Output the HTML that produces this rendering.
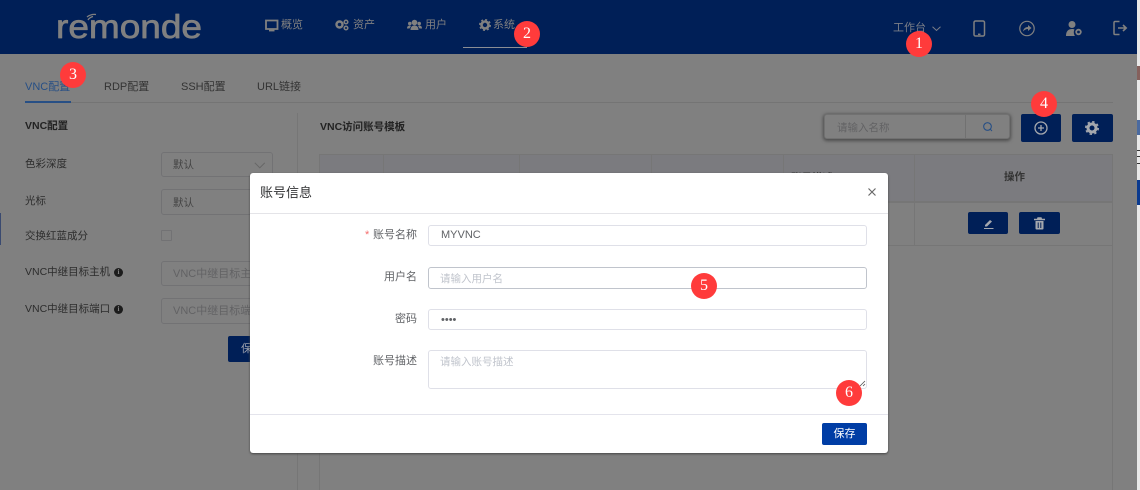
<!DOCTYPE html>
<html><head><meta charset="utf-8"><style>
html,body{margin:0;padding:0}
body{width:1140px;height:490px;overflow:hidden;position:relative;background:#808080;font-family:"Liberation Sans","Noto Sans CJK SC",sans-serif;font-size:11px;color:#2c2c2c}
.a{position:absolute;white-space:nowrap}
.b{position:absolute;box-sizing:border-box}
.t{position:absolute;white-space:nowrap;line-height:14px}
.nav{color:#808080;font-size:11px}
.in{position:absolute;box-sizing:border-box;border:1px solid #727274;border-radius:3px}
.ph{color:#626264}
.btn{position:absolute;background:#001f57;border-radius:2px}
.mi{position:absolute;box-sizing:border-box;border:1px solid #dfe0e8;border-radius:3px;background:#fff;font-size:11px;padding-left:12px;color:#606266;line-height:19px}
.bd{position:absolute;width:26px;height:26px;margin:-13px 0 0 -13px;border-radius:50%;background:#ff3b3b;color:#fff;font:16px/26px "Liberation Serif",serif;text-align:center;z-index:10}
svg{position:absolute;overflow:visible}
</style></head><body>
<!-- header -->
<div class="b" style="left:0;top:0;width:1137px;height:54px;background:#001f57"></div>
<svg style="left:0;top:0" width="230" height="54">
<text x="56" y="38" font-family="Liberation Sans,sans-serif" font-size="33" fill="#808080" stroke="#808080" stroke-width=".7" stroke-linejoin="round" textLength="146" lengthAdjust="spacingAndGlyphs">remonde</text>
<path d="M88 20a8 8 0 0 1 5-3.500M87 17a12 12 0 0 1 9-2.500" fill="none" stroke="#808080" stroke-width="1.300"/>
</svg>
<svg style="left:265px;top:19px" width="14" height="13"><path d="M1 1.500h11.500v8.500h-11.500z" fill="none" stroke="#808080" stroke-width="1.800"/><path d="M4 11.500h5.500" stroke="#808080" stroke-width="1.800"/></svg>
<div class="t nav" style="left:281px;top:18px">概览</div>
<svg style="left:335px;top:19px" width="15" height="13"><circle cx="4.500" cy="5.500" r="3" fill="none" stroke="#808080" stroke-width="2.400"/><circle cx="11" cy="3" r="1.800" fill="none" stroke="#808080" stroke-width="1.500"/><circle cx="11" cy="9" r="1.800" fill="none" stroke="#808080" stroke-width="1.500"/></svg>
<div class="t nav" style="left:353px;top:18px">资产</div>
<svg style="left:407px;top:19px" width="15" height="12"><circle cx="7.500" cy="3.500" r="2.800" fill="#808080"/><circle cx="2.800" cy="4.500" r="1.800" fill="#808080"/><circle cx="12.200" cy="4.500" r="1.800" fill="#808080"/><path d="M3.500 11c0-3 1.500-4.500 4-4.500s4 1.500 4 4.500zM0 9.500c0-2 1-3 3-3l1 .5-1.500 2.500zM15 9.500c0-2-1-3-3-3l-1 .5 1.500 2.500z" fill="#808080"/></svg>
<div class="t nav" style="left:425px;top:18px">用户</div>
<svg style="left:479px;top:19px" width="12" height="12"><circle cx="6" cy="6" r="3.500" fill="none" stroke="#808080" stroke-width="2.600"/><circle cx="6" cy="6" r="5.300" fill="none" stroke="#808080" stroke-width="1.400" stroke-dasharray="2 2.160"/></svg>
<div class="t nav" style="left:493px;top:18px">系统</div>
<div class="b" style="left:463px;top:47px;width:64px;height:1px;background:#8a8d94"></div>
<div class="t" style="left:893px;top:21px;color:#7a7e87;font-size:11px">工作台</div>
<svg style="left:932px;top:26px" width="9" height="6"><path d="M.5 .8l4 3.700 4-3.700" fill="none" stroke="#7a7e87"/></svg>
<svg style="left:973px;top:20px" width="13" height="17"><rect x="1" y="1" width="10.500" height="15" rx="1.500" fill="none" stroke="#808080" stroke-width="1.500"/><path d="M5 14.300h2.500" stroke="#808080" stroke-width="1.500"/></svg>
<svg style="left:1019px;top:20px" width="17" height="17"><circle cx="8" cy="8.500" r="7.200" fill="none" stroke="#808080" stroke-width="1.200"/><path d="M4 11.500c.5-3 2.500-4.500 5-4.500v-2l3.500 3-3.500 3v-2c-2 0-3.500 .8-5 2.500z" fill="#808080"/></svg>
<svg style="left:1066px;top:20px" width="17" height="17"><circle cx="6" cy="4.500" r="3.500" fill="#808080"/><path d="M0 16c0-5 2.500-7 6-7 1 0 2 .2 2.500 .5-1 1.500-1 4.500 .5 6.500z" fill="#808080"/><circle cx="12.500" cy="12" r="2.300" fill="none" stroke="#808080" stroke-width="1.800"/></svg>
<svg style="left:1113px;top:20px" width="16" height="16"><path d="M6.500 1.500h-4.500a1 1 0 0 0-1 1v11a1 1 0 0 0 1 1h4.500" fill="none" stroke="#808080" stroke-width="1.500"/><path d="M5 8h7.500M10 5l3.200 3-3.200 3" fill="none" stroke="#808080" stroke-width="1.600"/></svg>

<!-- tabs -->
<div class="t" style="left:25px;top:80px;color:#274f85">VNC配置</div>
<div class="t" style="left:104px;top:80px;color:#333">RDP配置</div>
<div class="t" style="left:181px;top:80px;color:#333">SSH配置</div>
<div class="t" style="left:257px;top:80px;color:#333">URL链接</div>
<div class="b" style="left:25px;top:102px;width:1088px;height:1px;background:#747474"></div>
<div class="b" style="left:25px;top:101px;width:46px;height:2px;background:#274f85"></div>

<!-- left -->
<div class="b" style="left:297px;top:113px;width:1px;height:377px;background:#767676"></div>
<div class="t" style="left:25px;top:119px;font-size:10.500px;font-weight:bold;color:#222">VNC配置</div>
<div class="t" style="left:25px;top:157px;font-size:10.500px">色彩深度</div>
<div class="t" style="left:25px;top:194px;font-size:10.500px">光标</div>
<div class="t" style="left:25px;top:229px;font-size:10.500px">交换红蓝成分</div>
<div class="t" style="left:25px;top:265px;font-size:10.500px">VNC中继目标主机</div>
<div class="t" style="left:25px;top:302px;font-size:10.500px">VNC中继目标端口</div>
<div class="b" style="left:114px;top:268px;width:9px;height:9px;border-radius:50%;background:#1c1c1c;color:#808080;font:bold 7px/9px 'Liberation Serif',serif;text-align:center">i</div>
<div class="b" style="left:114px;top:305px;width:9px;height:9px;border-radius:50%;background:#1c1c1c;color:#808080;font:bold 7px/9px 'Liberation Serif',serif;text-align:center">i</div>
<div class="in" style="left:161px;top:152px;width:112px;height:25px"></div>
<div class="t" style="left:173px;top:158px;font-size:10.500px;color:#444">默认</div>
<svg style="left:254px;top:162px" width="12" height="7"><path d="M.8 .8l5 5 5-5" fill="none" stroke="#666"/></svg>
<div class="in" style="left:161px;top:189px;width:112px;height:26px"></div>
<div class="t" style="left:173px;top:196px;font-size:10.500px;color:#444">默认</div>
<div class="in" style="left:161px;top:230px;width:11px;height:11px;border-radius:1px"></div>
<div class="in" style="left:161px;top:261px;width:112px;height:25px"></div>
<div class="t ph" style="left:173px;top:267px">VNC中继目标主机</div>
<div class="in" style="left:161px;top:298px;width:112px;height:26px"></div>
<div class="t ph" style="left:173px;top:304px">VNC中继目标端口</div>
<div class="btn" style="left:228px;top:336px;width:45px;height:26px;color:#9aa0ad;line-height:26px;padding-left:13px;box-sizing:border-box;font-size:11px">保存</div>

<!-- right -->
<div class="t" style="left:320px;top:120px;font-size:10.500px;font-weight:bold;color:#222">VNC访问账号模板</div>
<div class="b" style="left:824px;top:114px;width:186px;height:25px;border:1px solid #717171;border-radius:3px;box-shadow:0 1px 3px 1px #4d4d4d;background:#808080"></div>
<div class="b" style="left:965px;top:114px;width:1px;height:25px;background:#717171"></div>
<div class="t ph" style="left:837px;top:121px;font-size:10.500px">请输入名称</div>
<svg style="left:983px;top:122px" width="10" height="10"><circle cx="4.500" cy="4.500" r="3.800" fill="none" stroke="#274f85" stroke-width="1.100"/><path d="M7 7l2 2" stroke="#274f85"/></svg>
<div class="btn" style="left:1021px;top:114px;width:40px;height:28px"></div>
<svg style="left:1034px;top:121px" width="14" height="14"><circle cx="7" cy="7" r="6" fill="none" stroke="#a5a8ae" stroke-width="1.300"/><path d="M4 7h6M7 4v6" stroke="#a5a8ae" stroke-width="1.300"/></svg>
<div class="btn" style="left:1072px;top:114px;width:41px;height:28px"></div>
<svg style="left:1085px;top:121px" width="14" height="14"><circle cx="7" cy="7" r="4" fill="none" stroke="#a5a8ae" stroke-width="3"/><circle cx="7" cy="7" r="6.200" fill="none" stroke="#a5a8ae" stroke-width="1.600" stroke-dasharray="2.400 2.470"/></svg>

<!-- table -->
<div class="b" style="left:319px;top:154px;width:794px;height:48px;background:#7b7b7f;border:1px solid #767676"></div>
<div class="b" style="left:319px;top:202px;width:794px;height:1px;background:#767676"></div>
<div class="b" style="left:319px;top:245px;width:794px;height:1px;background:#767676"></div>
<div class="b" style="left:319px;top:154px;width:1px;height:336px;background:#767676"></div>
<div class="b" style="left:1112px;top:154px;width:1px;height:336px;background:#767676"></div>
<div class="b" style="left:383px;top:154px;width:1px;height:92px;background:#767676"></div>
<div class="b" style="left:519px;top:154px;width:1px;height:92px;background:#767676"></div>
<div class="b" style="left:651px;top:154px;width:1px;height:92px;background:#767676"></div>
<div class="b" style="left:783px;top:154px;width:1px;height:92px;background:#767676"></div>
<div class="b" style="left:914px;top:154px;width:1px;height:92px;background:#767676"></div>
<div class="t" style="left:791px;top:171px;font-size:10.500px;font-weight:bold;color:#333">账号描述</div>
<div class="t" style="left:1004px;top:170px;font-size:10.500px;font-weight:bold;color:#333">操作</div>
<div class="btn" style="left:968px;top:212px;width:40px;height:22px"></div>
<svg style="left:983px;top:218px" width="12" height="11"><path d="M2 7l5-5 2 1.500-5 5H2z" fill="#a5a8ae"/><path d="M1 10.500h9.500" stroke="#a5a8ae" stroke-width="1"/></svg>
<div class="btn" style="left:1019px;top:212px;width:41px;height:22px"></div>
<svg style="left:1033px;top:217px" width="13" height="13"><path d="M1 2.500h11M4.500 2.500l.5-1.500h3l.5 1.500" fill="none" stroke="#a5a8ae" stroke-width="1.400"/><path d="M2.500 4h8v7.500a1 1 0 0 1-1 1h-6a1 1 0 0 1-1-1z" fill="#a5a8ae"/><path d="M5.200 5.500v5.500M7.800 5.500v5.500" stroke="#001f57"/></svg>

<!-- right window edge -->
<div class="b" style="left:1137px;top:0;width:3px;height:490px;background:#e8e8e8"></div>
<div class="b" style="left:1137px;top:180px;width:3px;height:25px;background:#0a3a8f"></div>
<div class="b" style="left:1137px;top:120px;width:3px;height:15px;background:#4a6aa0"></div>
<div class="b" style="left:1137px;top:150px;width:3px;height:1px;background:#333"></div>
<div class="b" style="left:1137px;top:156px;width:3px;height:1px;background:#333"></div>
<div class="b" style="left:1137px;top:163px;width:3px;height:1px;background:#333"></div>
<div class="b" style="left:1137px;top:66px;width:3px;height:14px;background:#85605c"></div>
<div class="b" style="left:0;top:213px;width:1px;height:32px;background:#3a4a70"></div>

<!-- modal -->
<div class="b" style="left:250px;top:173px;width:638px;height:280px;background:#fff;border-radius:3px;box-shadow:0 1px 2px #444"></div>
<div class="t" style="left:260px;top:185px;font-size:13px;line-height:16px;color:#303133">账号信息</div>
<svg style="left:868px;top:188px" width="8" height="8"><path d="M.5 .5l7 7M7.500 .5l-7 7" stroke="#6a6a6a" stroke-width="1.200"/></svg>
<div class="b" style="left:250px;top:213px;width:638px;height:1px;background:#e4e4e8"></div>
<div class="b" style="left:250px;top:414px;width:638px;height:1px;background:#e4e4ec"></div>

<div class="t" style="left:365px;top:228px;color:#f56c6c;font-size:11px">*</div>
<div class="t" style="left:373px;top:228px;color:#606266;font-size:11px">账号名称</div>
<div class="t" style="left:384px;top:270px;color:#606266;font-size:11px">用户名</div>
<div class="t" style="left:395px;top:312px;color:#606266;font-size:11px">密码</div>
<div class="t" style="left:373px;top:354px;color:#606266;font-size:11px">账号描述</div>

<div class="mi" style="left:428px;top:225px;width:439px;height:21px">MYVNC</div>
<div class="mi" style="left:428px;top:267px;width:439px;height:22px;border-color:#c0c4cc;color:#c0c4cc;font-size:10.500px;line-height:22px;padding-left:11px">请输入用户名</div>
<div class="mi" style="left:428px;top:309px;width:439px;height:21px;font-size:11px;line-height:20px">••••</div>
<div class="mi" style="left:428px;top:350px;width:439px;height:39px;color:#c0c4cc;font-size:10.500px;line-height:23px;padding-left:11px">请输入账号描述</div>
<svg style="left:859px;top:380px" width="7" height="7"><path d="M1 6l5-5M4 6l2-2" stroke="#555" stroke-width=".8"/></svg>
<div class="b" style="left:822px;top:423px;width:45px;height:22px;background:#003da5;border-radius:2px;color:#fff;text-align:center;font-size:11px;line-height:22px">保存</div>

<!-- badges -->
<div class="bd" style="left:919px;top:44px">1</div>
<div class="bd" style="left:527px;top:34px">2</div>
<div class="bd" style="left:73px;top:75px">3</div>
<div class="bd" style="left:1044px;top:104px">4</div>
<div class="bd" style="left:704px;top:286px">5</div>
<div class="bd" style="left:849px;top:393px">6</div>
</body></html>
